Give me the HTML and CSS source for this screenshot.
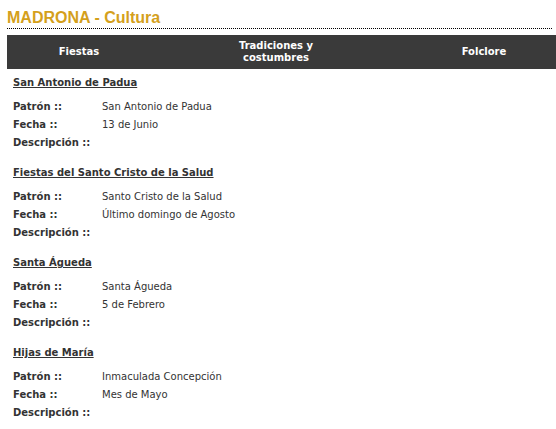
FILE: index.html
```html
<!DOCTYPE html>
<html lang="es">
<head>
<meta charset="utf-8">
<title>MADRONA - Cultura</title>
<link rel="stylesheet" href="styles.css">
</head>
<body>
<div class="page">
  <h1 class="title">MADRONA - Cultura</h1>
  <div class="tabs">
    <div class="tab tab-1">Fiestas</div>
    <div class="tab tab-2"><span class="tab-wrap">Tradiciones y costumbres</span></div>
    <div class="tab tab-3">Folclore</div>
  </div>
  <div class="list">
    <section class="fiesta">
      <h2 class="fiesta-name">San Antonio de Padua</h2>
      <dl class="info">
        <dt>Patrón ::</dt><dd>San Antonio de Padua</dd>
        <dt>Fecha ::</dt><dd>13 de Junio</dd>
        <dt>Descripción ::</dt><dd></dd>
      </dl>
    </section>
    <section class="fiesta">
      <h2 class="fiesta-name">Fiestas del Santo Cristo de la Salud</h2>
      <dl class="info">
        <dt>Patrón ::</dt><dd>Santo Cristo de la Salud</dd>
        <dt>Fecha ::</dt><dd>Último domingo de Agosto</dd>
        <dt>Descripción ::</dt><dd></dd>
      </dl>
    </section>
    <section class="fiesta">
      <h2 class="fiesta-name">Santa Águeda</h2>
      <dl class="info">
        <dt>Patrón ::</dt><dd>Santa Águeda</dd>
        <dt>Fecha ::</dt><dd>5 de Febrero</dd>
        <dt>Descripción ::</dt><dd></dd>
      </dl>
    </section>
    <section class="fiesta">
      <h2 class="fiesta-name">Hijas de María</h2>
      <dl class="info">
        <dt>Patrón ::</dt><dd>Inmaculada Concepción</dd>
        <dt>Fecha ::</dt><dd>Mes de Mayo</dd>
        <dt>Descripción ::</dt><dd></dd>
      </dl>
    </section>
  </div>
</div>
</body>
</html>
```

FILE: styles.css
```css
html, body {
  margin: 0;
  padding: 0;
  background: #ffffff;
  overflow: hidden;
}

body {
  font-family: "DejaVu Sans", Verdana, sans-serif;
  font-size: 10px;
  color: #333333;
}

.page {
  padding-left: 7px;
  width: 545px;
}

.title {
  margin: 0;
  padding-top: 8px;
  font-family: "Liberation Sans", Arial, sans-serif;
  font-size: 16px;
  line-height: 19px;
  font-weight: bold;
  color: #d4a01c;
  border-bottom: 1px dotted #000000;
  padding-bottom: 1px;
}

.tabs {
  margin-top: 6px;
  width: 560px;
  height: 34px;
  background: #3a3a3a;
  display: grid;
  grid-template-columns: 144px 250px 1fr;
  align-items: center;
  color: #ffffff;
  font-weight: bold;
  font-size: 10px;
  line-height: 12px;
  text-align: center;
}

.tab-wrap {
  display: inline-block;
  width: 90px;
}

.list {
  padding-left: 6px;
}

.fiesta {
  margin-bottom: 8px;
}

.fiesta-name {
  margin: 0;
  padding-top: 7px;
  font-size: 10px;
  line-height: 14px;
  font-weight: bold;
  text-decoration: underline;
  color: #333333;
}

.info {
  margin: 7px 0 0 0;
  display: grid;
  grid-template-columns: 89px 1fr;
  grid-auto-rows: 18px;
  align-items: center;
}

.info dt {
  font-weight: bold;
}

.info dd {
  margin: 0;
}
```
